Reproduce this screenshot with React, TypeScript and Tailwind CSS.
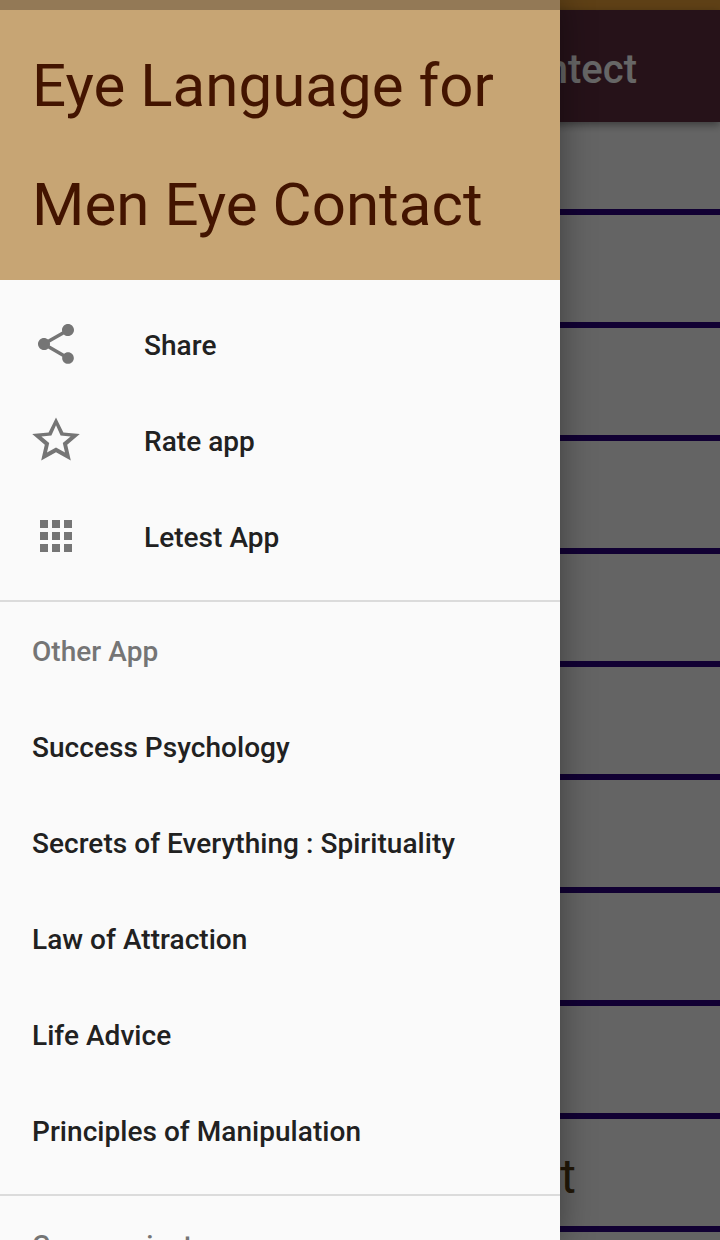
import type { ReactNode } from "react";

type DrawerItemType = {
  label: string;
  icon?: ReactNode;
};

const ShareIcon = () => (
  <svg className="h-12 w-12" viewBox="0 0 24 24" fill="currentColor">
    <path d="M18 16.08c-.76 0-1.44.3-1.96.77L8.91 12.7c.05-.23.09-.46.09-.7s-.04-.47-.09-.7l7.05-4.11c.54.5 1.25.81 2.04.81 1.66 0 3-1.34 3-3s-1.34-3-3-3-3 1.34-3 3c0 .24.04.47.09.7L8.04 9.81C7.5 9.31 6.79 9 6 9c-1.66 0-3 1.34-3 3s1.34 3 3 3c.79 0 1.5-.31 2.04-.81l7.12 4.16c-.05.21-.08.43-.08.65 0 1.61 1.31 2.92 2.92 2.92s2.92-1.31 2.92-2.92-1.31-2.92-2.92-2.92z" />
  </svg>
);

const StarIcon = () => (
  <svg className="h-12 w-12" viewBox="0 0 24 24" fill="currentColor">
    <path d="M23.9 9l-8.2-.7L12 .75 8.3 8.3.1 9l6.3 5.4-1.8 7.8L12 18.1l7.4 4.1-1.8-7.8zM12 15.8l-4.5 2.5 1.1-4.8-3.9-3.3 5-.43L12 4.6l2.3 5.17 5 .43-3.9 3.3 1.1 4.8z" />
  </svg>
);

const AppsIcon = () => (
  <svg className="h-12 w-12" viewBox="0 0 24 24" fill="currentColor">
    <path d="M4 8h4V4H4v4zm6 12h4v-4h-4v4zm-6 0h4v-4H4v4zm0-6h4v-4H4v4zm6 0h4v-4h-4v4zm6-10v4h4V4h-4zm-6 4h4V4h-4v4zm6 6h4v-4h-4v4zm0 6h4v-4h-4v4z" />
  </svg>
);

const mainItems: DrawerItemType[] = [
  { label: "Share", icon: <ShareIcon /> },
  { label: "Rate app", icon: <StarIcon /> },
  { label: "Letest App", icon: <AppsIcon /> },
];

const otherApps: DrawerItemType[] = [
  { label: "Success Psychology" },
  { label: "Secrets of Everything : Spirituality" },
  { label: "Law of Attraction" },
  { label: "Life Advice" },
  { label: "Principles of Manipulation" },
];

const rows = ["", "", "", "", "", "", "", "", "", "t", ""];

const DrawerItem = ({ label, icon }: DrawerItemType) => (
  <li className="flex h-24 items-center gap-16 px-8 text-[#212121]">
    {icon && <span className="text-[#757575]">{icon}</span>}
    <span className="pt-1">{label}</span>
  </li>
);

const SectionTitle = ({ children }: { children: ReactNode }) => (
  <h2 className="flex h-24 shrink-0 items-center px-8 pt-1 text-[#757575]">
    {children}
  </h2>
);

const MainPage = () => (
  <div className="flex h-full flex-col bg-[#fafafa]">
    <div className="h-2.5 shrink-0 bg-[#eba037]" />
    <header className="z-10 flex h-28 shrink-0 items-center justify-end bg-[#5f2f3f] pt-2 pr-[83px] text-[40px] font-medium text-white shadow-[0_3px_8px_rgba(0,0,0,0.4)]">
      Men Eye Contect
    </header>
    <ul className="-mt-5">
      {rows.map((row, i) => (
        <li
          key={i}
          className="flex h-[113px] items-center justify-end border-b-6 border-[#2b0080] pt-2 pr-36 text-[48px] text-[#553c14]"
        >
          {row}
        </li>
      ))}
    </ul>
  </div>
);

const Drawer = () => (
  <nav className="absolute inset-y-0 left-0 flex w-[560px] flex-col overflow-hidden bg-[#fafafa] text-[28px] leading-8 font-medium tracking-[0.04px] shadow-[0_0_32px_rgba(0,0,0,0.4)]">
    <div className="h-2.5 shrink-0 bg-[#937956]" />
    <h1 className="h-[270px] shrink-0 bg-[#c7a574] px-8 pt-4 text-[60px] leading-[119px] font-normal text-[#431400]">
      Eye Language for
      <br />
      Men Eye Contact
    </h1>
    <ul className="shrink-0 border-b-2 border-[#dbdbdb] py-4">
      {mainItems.map((item) => (
        <DrawerItem key={item.label} {...item} />
      ))}
    </ul>
    <SectionTitle>Other App</SectionTitle>
    <ul className="shrink-0 border-b-2 border-[#dbdbdb] pb-4">
      {otherApps.map((item) => (
        <DrawerItem key={item.label} {...item} />
      ))}
    </ul>
    <SectionTitle>Communicate</SectionTitle>
  </nav>
);

const App = () => {
  return (
    <div className="relative h-[1240px] w-[720px] overflow-hidden font-['Roboto',sans-serif]">
      <MainPage />
      <div className="absolute inset-0 z-10 bg-black/60" />
      <div className="absolute inset-0 z-20">
        <Drawer />
      </div>
    </div>
  );
};

export default App;
